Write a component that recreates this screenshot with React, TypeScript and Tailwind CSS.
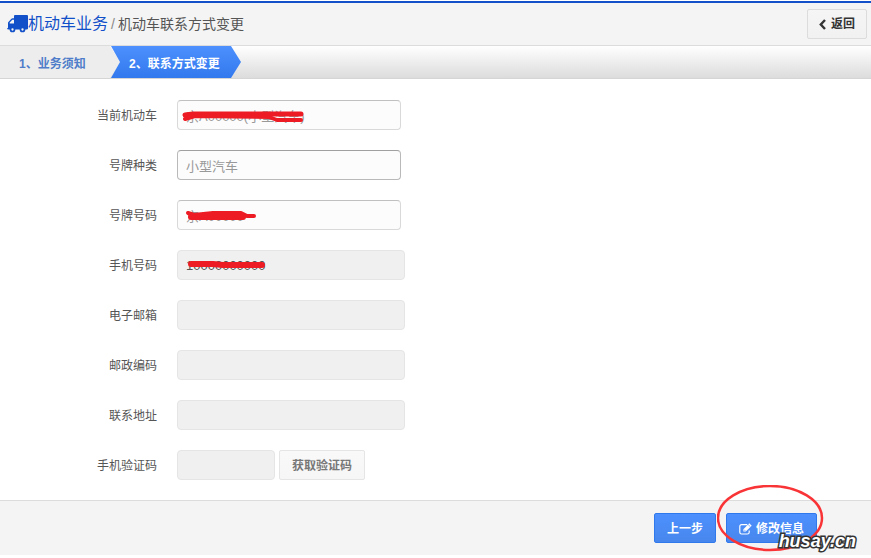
import React from 'react';

type FieldKind = 'plain' | 'active' | 'disabled';

const fieldStyles: Record<FieldKind, string> = {
  plain: 'w-[224px] border-[#d9d9d9] border-t-[#c0c0c0] bg-[#fcfcfc] text-[#999]',
  active: 'w-[224px] border-[#b9b9b9] border-t-[#a0a0a0] bg-[#fcfcfc] text-[#999]',
  disabled: 'w-[228px] border-[#e5e5e5] bg-[#f0f0f0] text-[#555]',
};

function Row({ id, label, children }: { id: string; label: string; children: React.ReactNode }) {
  return (
    <div className="flex items-center">
      <label htmlFor={id} className="w-[157px] pt-0.5 text-right text-xs text-[#555]">
        {label}
      </label>
      <div className="relative ml-5 flex gap-1">{children}</div>
    </div>
  );
}

function Field({ id, kind, value = '' }: { id: string; kind: FieldKind; value?: string }) {
  return (
    <input
      id={id}
      readOnly
      defaultValue={value}
      className={`h-[30px] rounded border px-2 text-[13px] outline-none ${fieldStyles[kind]}`}
    />
  );
}

function Marker({ children }: { children: React.ReactNode }) {
  return (
    <svg
      aria-hidden="true"
      className="pointer-events-none absolute left-0 top-0"
      width="140"
      height="30"
      fill="none"
      stroke="#ed1c24"
      strokeLinecap="round"
      strokeLinejoin="round"
    >
      {children}
    </svg>
  );
}

function Truck() {
  return (
    <svg aria-hidden="true" width="21" height="18" viewBox="0 0 21 18" fill="#1150c8">
      <path
        fillRule="evenodd"
        d="M8 0h12q1 0 1 1v12.500q0 1-1.500 1H2Q0 14.500 0 13.500l1-.8V8q0-.6.400-1l3-3.200Q5 3.200 5.500 3.200H7V1Q7 0 8 0ZM5.300 4.800 2.700 7.600v.9H7V4.800Z"
      />
      <circle cx="5.500" cy="14.500" r="2" fill="#f4f4f4" stroke="#1150c8" strokeWidth="1.700" />
      <circle cx="15.500" cy="14.500" r="2" fill="#f4f4f4" stroke="#1150c8" strokeWidth="1.700" />
    </svg>
  );
}

function Chevron() {
  return (
    <svg aria-hidden="true" width="7" height="11" viewBox="0 0 7 11" fill="none" stroke="#333" strokeWidth="2.400">
      <path d="M6 1 1.800 5.500 6 10" />
    </svg>
  );
}

function EditIcon() {
  return (
    <svg aria-hidden="true" width="13" height="12" viewBox="0 0 13 12" fill="none" stroke="#fff">
      <path strokeWidth="1.200" d="M8.200 1.600H2.600Q.8 1.600.8 3.400v5.800Q.8 11 2.600 11h5.800q1.800 0 1.800-1.800V7.600" />
      <path fill="#fff" stroke="none" d="M10.300.3 12.700 2.700 6.800 8.600H4.400V6.200Z" />
      <path stroke="#4a8bf5" strokeWidth=".7" d="M5 6.600 6.500 8.100M9.100 1.500 11.500 3.900" />
    </svg>
  );
}

const primaryButton =
  'flex h-[30px] items-center justify-center gap-1 rounded-xs border border-[#3079ed] bg-linear-to-b from-[#4d90fe] to-[#4787ed] px-3 pt-0.5 text-xs font-bold text-white';

export default function App() {
  return (
    <div className="bg-white pt-px font-['Liberation_Sans','Noto_Sans_CJK_SC',sans-serif]">
      <header className="flex h-[45px] items-center justify-between border-b border-t-2 border-b-[#dcdcdc] border-t-[#1150c8] bg-[#f4f4f4] pl-[7px] pr-1">
        <h1 className="flex items-center">
          <Truck />
          <a href="#business" className="text-base text-[#1150c8]">
            机动车业务
          </a>
          <span className="mx-[3px] text-sm text-[#888]">/</span>
          <span className="text-sm text-[#555]">机动车联系方式变更</span>
        </h1>
        <button
          type="button"
          className="flex h-[30px] items-center gap-[5px] rounded-xs border border-[#dcdcdc] bg-linear-to-b from-[#f5f5f5] to-[#f1f1f1] px-[11px] text-xs font-bold text-[#333]"
        >
          <Chevron />
          返回
        </button>
      </header>

      <ol className="flex h-[33px] border-b border-[#d5d5d5] bg-linear-to-b from-white to-[#dcdcdc] text-xs font-bold">
        <li className="flex w-[120px] items-center bg-[#ededed] pl-[19px] pt-[3px] text-[#4f7dc9] [clip-path:polygon(0_0,110px_0,100%_50%,110px_100%,0_100%)]">
          1、业务须知
        </li>
        <li
          aria-current="step"
          className="-ml-[9px] flex w-[130px] items-center bg-linear-to-b from-[#4d90fe] to-[#3279ee] pl-[18px] pt-[3px] text-white [clip-path:polygon(0_0,120px_0,100%_50%,120px_100%,0_100%,9px_50%)]"
        >
          2、联系方式变更
        </li>
      </ol>

      <form onSubmit={(e) => e.preventDefault()}>
        <div className="flex flex-col gap-5 pb-5 pt-[21px]">
          <Row id="vehicle" label="当前机动车">
            <Field id="vehicle" kind="plain" value="京A00000(小型汽车)" />
            <Marker>
              <path strokeWidth="5" d="M8 15 16 14 60 14 124 14" />
              <path strokeWidth="4" d="M8 19 18 16 92 17 100 20 124 20" />
            </Marker>
          </Row>
          <Row id="plate-type" label="号牌种类">
            <Field id="plate-type" kind="active" value="小型汽车" />
          </Row>
          <Row id="plate-number" label="号牌号码">
            <Field id="plate-number" kind="plain" value="京A00000" />
            <Marker>
              <path strokeWidth="4" d="M11 13 17 15 36 13 64 13 70 16 77 16" />
              <path strokeWidth="6" d="M14 17 66 17" />
            </Marker>
          </Row>
          <Row id="mobile" label="手机号码">
            <Field id="mobile" kind="disabled" value="10000000000" />
            <Marker>
              <path strokeWidth="6" d="M14 14 36 14 46 15 85 15" />
            </Marker>
          </Row>
          <Row id="email" label="电子邮箱">
            <Field id="email" kind="disabled" />
          </Row>
          <Row id="postcode" label="邮政编码">
            <Field id="postcode" kind="disabled" />
          </Row>
          <Row id="address" label="联系地址">
            <Field id="address" kind="disabled" />
          </Row>
          <Row id="code" label="手机验证码">
            <input
              id="code"
              readOnly
              className="h-[30px] w-[98px] rounded border border-[#e5e5e5] bg-[#f0f0f0] px-2 text-[13px] outline-none"
            />
            <button
              type="button"
              className="h-[30px] rounded-xs border border-[#e5e5e5] bg-linear-to-b from-[#f9f9f9] to-[#f6f6f6] px-3 pt-0.5 text-xs font-bold text-[#777]"
            >
              获取验证码
            </button>
          </Row>
        </div>

        <footer className="relative flex justify-end gap-[10px] border-t border-[#dcdcdc] bg-[#f4f4f4] py-3 pr-[54px]">
          <button type="button" className={primaryButton}>
            上一步
          </button>
          <div className="relative">
            <button type="submit" className={primaryButton}>
              <EditIcon />
              修改信息
            </button>
            <svg
              aria-hidden="true"
              className="pointer-events-none absolute -left-[9px] -top-7"
              width="108"
              height="68"
              fill="none"
            >
              <ellipse cx="53" cy="33" rx="52" ry="32" stroke="#f93437" strokeWidth="2.500" />
            </svg>
          </div>
          <span className="pointer-events-none absolute bottom-1 right-[15px] text-lg/5 font-bold italic text-white [-webkit-text-stroke:3px_#333] [paint-order:stroke_fill]">
            husay.cn
          </span>
        </footer>
      </form>
    </div>
  );
}
